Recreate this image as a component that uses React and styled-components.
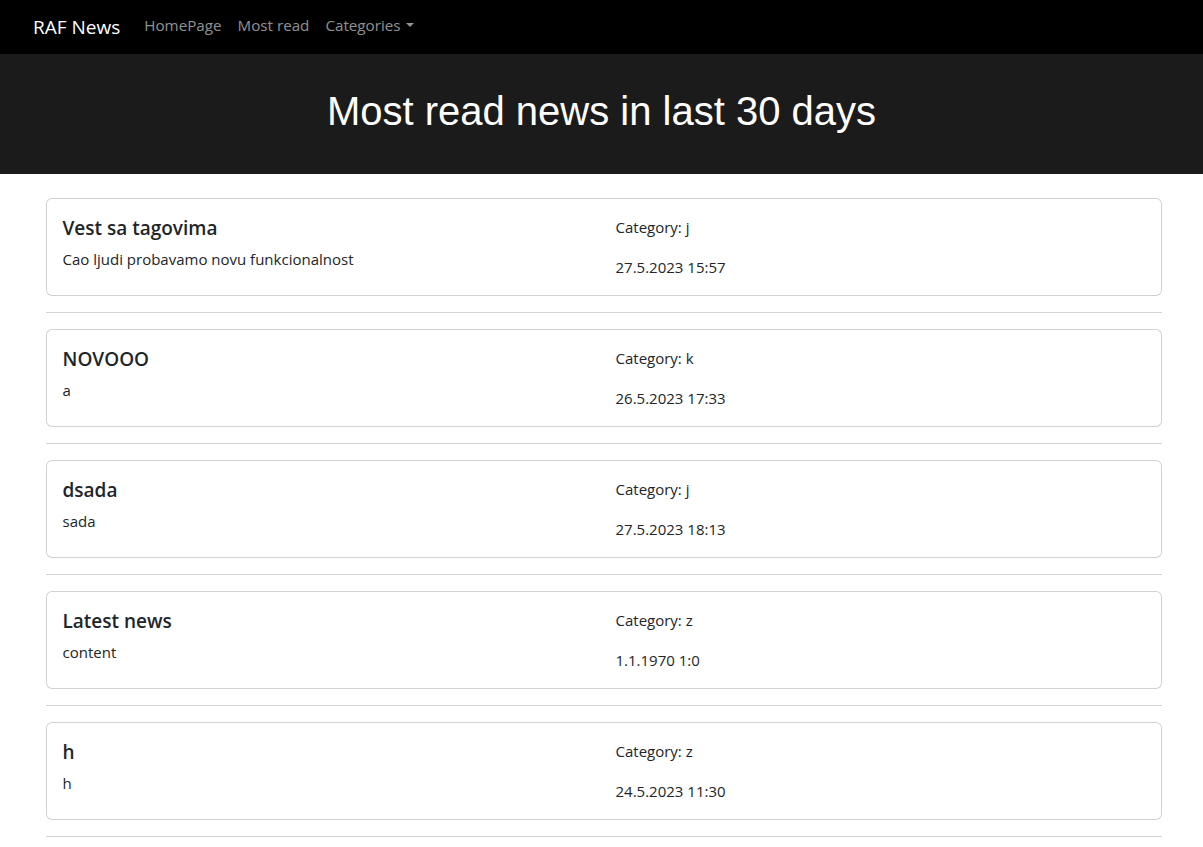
import React from "react";
import styled, { createGlobalStyle } from "styled-components";

const news = [
  { title: "Vest sa tagovima", content: "Cao ljudi probavamo novu funkcionalnost", category: "j", date: "27.5.2023 15:57" },
  { title: "NOVOOO", content: "a", category: "k", date: "26.5.2023 17:33" },
  { title: "dsada", content: "sada", category: "j", date: "27.5.2023 18:13" },
  { title: "Latest news", content: "content", category: "z", date: "1.1.1970 1:0" },
  { title: "h", content: "h", category: "z", date: "24.5.2023 11:30" },
];

const GlobalStyle = createGlobalStyle`
  * { box-sizing: border-box; }
  body {
    margin: 0;
    background: #fff;
    color: #212529;
    font-family: "Open Sans", "Noto Sans", sans-serif;
    font-size: 16px;
    line-height: 1.5;
  }
`;

const Navbar = styled.nav`
  display: flex;
  align-items: center;
  height: 54px;
  padding: 0 33px;
  background: #000;
`;

const Brand = styled.a`
  margin-right: 16px;
  color: #fff;
  font-size: 19px;
  line-height: 30px;
  text-decoration: none;
`;

const NavLink = styled.a`
  display: flex;
  align-items: center;
  gap: 5px;
  padding: 6px 8px 10px;
  color: rgba(255, 255, 255, 0.58);
  font-size: 15.2px;
  text-decoration: none;
`;

const Caret = styled.span`
  display: inline-block;
  border-top: 4.5px solid currentColor;
  border-left: 4px solid transparent;
  border-right: 4px solid transparent;
`;

const Hero = styled.header`
  display: flex;
  align-items: center;
  justify-content: center;
  height: 120px;
  padding-bottom: 6px;
  background: #1b1b1b;
`;

const HeroTitle = styled.h1`
  margin: 0;
  color: #fff;
  font-family: "Liberation Sans", Arial, sans-serif;
  font-weight: 400;
  font-size: 40px;
  line-height: 1.2;
`;

const Container = styled.main`
  width: 1140px;
  margin: 24px auto 0;
  padding: 0 10px 0 14px;
`;

const Card = styled.div`
  border: 1px solid rgba(0, 0, 0, 0.175);
  border-radius: 6px;
  background: #fff;
`;

const CardBody = styled.div`
  display: grid;
  grid-template-columns: 1fr 1fr;
  column-gap: 24px;
  padding: 16px;
`;

const Col = styled.div`
  display: flex;
  flex-direction: column;
`;

const Title = styled.h5`
  margin: 0 0 7px;
  padding-top: 1px;
  font-size: 19px;
  font-weight: 600;
  line-height: 24px;
`;

const Text = styled.p`
  margin: 0 0 ${(p) => (p.$last ? 0 : 16)}px;
  font-size: 15px;
  line-height: 24px;
`;

const Divider = styled.hr`
  margin: 16px 0;
  border: 0;
  border-top: 1px solid #d3d3d3;
`;

export default function App() {
  return (
    <>
      <GlobalStyle />
      <Navbar>
        <Brand href="#">RAF News</Brand>
        <NavLink href="#">HomePage</NavLink>
        <NavLink href="#">Most read</NavLink>
        <NavLink href="#">
          Categories <Caret />
        </NavLink>
      </Navbar>
      <Hero>
        <HeroTitle>Most read news in last 30 days</HeroTitle>
      </Hero>
      <Container>
        {news.map((n, i) => (
          <React.Fragment key={i}>
            <Card>
              <CardBody>
                <Col>
                  <Title>{n.title}</Title>
                  <Text $last>{n.content}</Text>
                </Col>
                <Col>
                  <Text>Category: {n.category}</Text>
                  <Text $last>{n.date}</Text>
                </Col>
              </CardBody>
            </Card>
            <Divider />
          </React.Fragment>
        ))}
      </Container>
    </>
  );
}
